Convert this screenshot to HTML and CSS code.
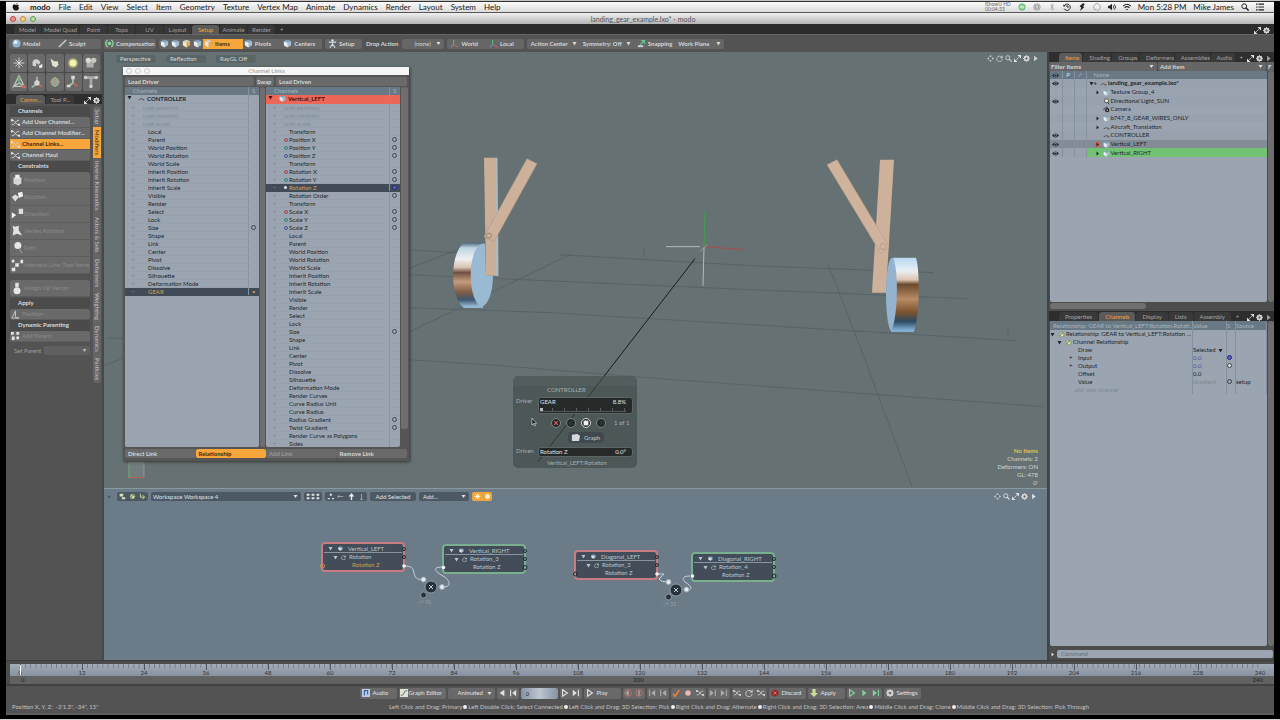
FILE: index.html
```html
<!DOCTYPE html>
<html lang="en">
<head>
<meta charset="utf-8">
<title>landing_gear_example.lxo* - modo</title>
<link rel="stylesheet" href="styles.css">
</head>
<body>
<svg class="sprite" aria-hidden="true">
  <defs>
    <linearGradient id="chromeL" x1="0" y1="0" x2="0" y2="1"><stop offset="0" stop-color="#49657c"/><stop offset=".08" stop-color="#bdd3e2"/><stop offset=".25" stop-color="#eef0f2"/><stop offset=".38" stop-color="#d9c3b2"/><stop offset=".46" stop-color="#6f5040"/><stop offset=".6" stop-color="#c39c7e"/><stop offset=".76" stop-color="#7f5d45"/><stop offset=".88" stop-color="#3e5870"/><stop offset="1" stop-color="#a5cbea"/></linearGradient>
    <linearGradient id="chromeR" x1="0" y1="0" x2="0" y2="1"><stop offset="0" stop-color="#b8d8f0"/><stop offset=".18" stop-color="#e9eff4"/><stop offset=".3" stop-color="#dcc4b0"/><stop offset=".36" stop-color="#6b4a2c"/><stop offset=".56" stop-color="#b88c64"/><stop offset=".74" stop-color="#7a522e"/><stop offset=".86" stop-color="#2c4a62"/><stop offset="1" stop-color="#8ebee6"/></linearGradient>
    <symbol id="cube" viewBox="0 0 10 10"><path d="M1 2.5 5 1l4 1.5V7L5 9.5 1 7z" fill="#a9bdcc"/><path d="M1 2.5 5 4v5.500L1 7z" fill="#e8edf0"/><path d="M1 2.500 5 1l4 1.500L5 4z" fill="#7aa3bf"/></symbol>
    <symbol id="cubeo" viewBox="0 0 10 10"><path d="M1 2.500 5 1l4 1.500V7L5 9.500 1 7z" fill="#e2a552"/><path d="M1 2.500 5 4v5.500L1 7z" fill="#efe6d4"/><path d="M1 2.500 5 1l4 1.500L5 4z" fill="#c9d3d9"/></symbol>
    <symbol id="pan" viewBox="0 0 10 10"><path d="M5 0l2 2.500H3zM5 10l2-2.500H3zM0 5l2.500-2v4zM10 5 7.500 3v4z" fill="#c8cece"/></symbol>
    <symbol id="spin" viewBox="0 0 10 10"><path d="M8 3A4 4 0 1 0 9 6" fill="none" stroke="#c8cece" stroke-width="1.200"/><path d="M9.500.5v4h-4z" fill="#c8cece"/></symbol>
    <symbol id="mag" viewBox="0 0 10 10"><circle cx="4" cy="4" r="3" fill="none" stroke="currentColor" stroke-width="1.200"/><path d="m6 6 3.500 3.500" stroke="currentColor" stroke-width="1.600"/></symbol>
    <symbol id="expand" viewBox="0 0 10 10"><path d="M5 0h5v5zM0 5v5h5zM4 6l3-3" fill="#e2e2e2"/><path d="m3 7 4-4" stroke="#e2e2e2"/></symbol>
    <symbol id="gear" viewBox="0 0 10 10"><circle cx="5" cy="5" r="3" fill="none" stroke="#d4d4d4" stroke-width="2"/><path d="M5 0v10M0 5h10M1.500 1.500l7 7M8.500 1.500l-7 7" stroke="#d4d4d4" stroke-width="1.200"/><circle cx="5" cy="5" r="1.300" fill="#555"/></symbol>
    <symbol id="tri" viewBox="0 0 10 10"><path d="m3 1 5 4-5 4z" fill="currentColor"/></symbol>
    <symbol id="down" viewBox="0 0 10 10"><path d="m1 2h8L5 9z" fill="currentColor"/></symbol>
    <symbol id="eye" viewBox="0 0 10 10"><path d="M0 5Q5-1 10 5 5 11 0 5" fill="#222d37"/><circle cx="5" cy="5" r="2" fill="#8997a3"/><circle cx="5" cy="5" r="1.200" fill="#10151b"/></symbol>
    <symbol id="curve" viewBox="0 0 10 10"><path d="M1 7q4-4 8 0" fill="none" stroke="#4a5058" stroke-width="1.200"/><path d="M6 7h3" stroke="#a33"/></symbol>
    <symbol id="play" viewBox="0 0 10 10"><path d="m2 1 6 4-6 4z" fill="none" stroke="currentColor" stroke-width="1.400"/></symbol>
    <symbol id="back" viewBox="0 0 10 10"><path d="M8 1 2 5l6 4z" fill="currentColor"/></symbol>
    <symbol id="step" viewBox="0 0 10 10"><path d="m1 1 5 4-5 4z" fill="currentColor"/><path d="M8 1v8" stroke="currentColor" stroke-width="1.400"/></symbol>
    <symbol id="stepb" viewBox="0 0 10 10"><path d="m9 1-5 4 5 4z" fill="currentColor"/><path d="M2 1v8" stroke="currentColor" stroke-width="1.400"/></symbol>
    <symbol id="fig" viewBox="0 0 10 10"><circle cx="5" cy="1.500" r="1.300" fill="#cfe0ea"/><path d="M1 3.500h8M5 3v3L2 9.500M5 6l3 3.500" fill="none" stroke="#cfe0ea" stroke-width="1.300"/></symbol>
    <symbol id="axis" viewBox="0 0 10 10"><path d="M4 6V1" stroke="#59b777" stroke-width="1.200"/><path d="m4 6 5 3" stroke="#d06056" stroke-width="1.200"/><path d="m4 6-3 3" stroke="#6a8fc8" stroke-width="1.200"/></symbol>
    <symbol id="chan" viewBox="0 0 10 10"><path d="M1 2.500q3 0 4 2.500t4 2.500M1 7.500Q4 7.500 5 5t4-2.500" fill="none" stroke="#d2d2d2"/><path d="M0 1.500h2v2H0zM8 6.500h2v2H8z" fill="#eee"/></symbol>
    <symbol id="rel" viewBox="0 0 10 10"><circle cx="5" cy="5" r="3.500" fill="#dfe6c5" stroke="#6d8b4f"/><path d="M3 7q1-4 4-4" fill="none" stroke="#53733b" stroke-width="1.300"/></symbol>
  </defs>
</svg>

<header class="menubar">
  <svg class="apple" viewBox="0 0 10 10"><path d="M5 3C3-.5 0 3 1 6s2.500 4 4 3c1.500 1 3 0 4-3C7 5 7.500 3.500 8.700 3 7.500 1.500 6 2.500 5 3zM5 2.300Q5 .500 6.800 0 7 2 5 2.300" fill="#111"/></svg>
  <nav class="menus"><button class="app-name">modo</button><button>File</button><button>Edit</button><button>View</button><button>Select</button><button>Item</button><button>Geometry</button><button>Texture</button><button>Vertex Map</button><button>Animate</button><button>Dynamics</button><button>Render</button><button>Layout</button><button>System</button><button>Help</button></nav>
  <div class="status-icons">
    <div class="rec">iShowU HD<br>00:04:33</div>
    <svg viewBox="0 0 10 10"><circle cx="5" cy="5" r="4" fill="#8ad89a" stroke="#58a868"/><path d="M2 5h6" stroke="#fff"/></svg>
    <svg viewBox="0 0 10 10"><circle cx="5" cy="5" r="4" fill="none" stroke="#888"/><path d="M3 3.500h4v3H3z" fill="none" stroke="#888"/></svg>
    <svg viewBox="0 0 10 10"><path d="m3 3 4 4-2 2V1l2 2-4 4" fill="none" stroke="#999" stroke-width=".8"/></svg>
    <svg viewBox="0 0 10 10"><path d="M1.500 3.500A4 4 0 1 1 1.500 7M5 2.500V5h2.500" fill="none" stroke="#222" stroke-width="1.200"/><path d="M0 2l1 3 2.500-1.500z" fill="#222"/></svg>
    <svg viewBox="0 0 10 10"><path d="M6.500 0 2 4l2 1.500L2.500 10 8 5 6 4l2.500-2z" fill="#222"/></svg>
    <svg viewBox="0 0 10 10"><path d="M2 8.500Q-1 5 2 2t6 0 0 6-4 0z" fill="none" stroke="#888" stroke-width=".8"/></svg>
    <svg viewBox="0 0 10 10"><path d="M0 3.500h2L5 1v8L2 6.500H0z" fill="#222"/><path d="M6.500 3q1.500 2 0 4M8 1.500q3 3.500 0 7" fill="none" stroke="#222"/></svg>
    <svg viewBox="0 0 10 10"><path d="M0 4q5-5 10 0M2 6q3-3 6 0" fill="none" stroke="#222" stroke-width="1.300"/><path d="m3.500 7.500h3L5 9z" fill="#222"/></svg>
    <span>Mon 5:28 PM</span><span>Mike James</span>
    <svg viewBox="0 0 10 10"><use href="#mag"/></svg>
    <svg viewBox="0 0 10 10"><path d="M0 1.500h2m1 0h7M0 5h2m1 0h7M0 8.500h2m1 0h7" stroke="#222" stroke-width="1.500"/></svg>
  </div>
</header>

<div class="titlebar"><i class="light red"></i><i class="light amber"></i><i class="light green"></i><h1>landing_gear_example.lxo* - modo</h1></div>

<div class="layout-tabs">
  <button>Model</button><button class="long">Model Quad</button><button>Paint</button><button>Topo</button><button>UV</button><button>Layout</button><button class="on">Setup</button><button>Animate</button><button>Render</button><span class="plus">+</span>
  <span class="corner"><svg><use href="#expand"/></svg><svg><use href="#gear"/></svg></span>
</div>

<div class="toolbar">
  <div class="group w-mode"><button><svg viewBox="0 0 10 10"><circle cx="5" cy="5" r="4.500" fill="#8fb5d6"/><circle cx="4" cy="3.500" r="2" fill="#e9f2f8"/></svg>Model</button><button><svg viewBox="0 0 10 10"><path d="M1 9 9 1" stroke="#c6cbd0" stroke-width="1.600"/></svg>Sculpt</button></div>
  <div class="group w-comp"><button><svg viewBox="0 0 10 10"><path d="M3 1Q-1 5 3 9M7 1q4 4 0 8" fill="none" stroke="#8fd6a0" stroke-width="1.400"/><circle cx="5" cy="5" r="2" fill="#8fd6a0"/></svg>Compensation</button></div>
  <div class="group w-sel"><button aria-label="Vertices"><svg><use href="#cube"/></svg></button><button aria-label="Edges"><svg><use href="#cube"/></svg></button><button aria-label="Polygons"><svg><use href="#cubeo"/></svg></button><button aria-label="Materials"><svg><use href="#cube"/></svg></button><button class="on wide"><svg><use href="#cubeo"/></svg>Items</button><button class="wide"><svg><use href="#cube"/></svg>Pivots</button><button class="wide"><svg><use href="#cube"/></svg>Centers</button></div>
  <div class="group w-setup"><button><svg><use href="#fig"/></svg>Setup</button></div>
  <label class="drop" for="drop">Drop Action</label><select id="drop" class="w-drop"><option>(none)</option></select>
  <div class="group w-world"><button><svg><use href="#axis"/></svg>World</button><button><svg><use href="#axis"/></svg>Local</button></div>
  <div class="group w-action"><button>Action Center <svg class="arr"><use href="#down"/></svg></button><button>Symmetry: Off <svg class="arr"><use href="#down"/></svg></button><button><svg viewBox="0 0 10 10"><path d="M4 1h5v5L7 4 4 7 3 6l3-3z" fill="#63c795"/><path d="M1 7h6v2H1z" fill="#cfd8d8"/></svg>Snapping</button><button>Work Plane <svg class="arr far"><use href="#down"/></svg></button></div>
</div>

<main class="work">
  <aside class="left">
    <div class="tools">
      <button aria-label="Locator"><svg viewBox="0 0 18 18"><path d="M9 3v12M3 9h12M5 5l8 8M13 5l-8 8" stroke="#ddd"/></svg></button>
      <button aria-label="Bend"><svg viewBox="0 0 18 18"><path d="M4 12V8q1-4 6-3l3 3-2 3-3-2v4z" fill="#cfd0cf"/><path d="m11 12 4-2v4l-3 1z" fill="#eee"/></svg></button>
      <button aria-label="Grab"><svg viewBox="0 0 18 18"><path d="m4 4 4 3h4l1 4-3 3-4-2z" fill="#e4dfd2"/></svg></button>
      <button aria-label="Light"><svg viewBox="0 0 18 18"><circle cx="9" cy="9" r="6" fill="#979a67"/><circle cx="9" cy="9" r="4" fill="#f2f3b4"/></svg></button>
      <button aria-label="Camera"><svg viewBox="0 0 18 18"><path d="M4 8h8v6H4z" fill="#b0b0aa"/><circle cx="6" cy="6" r="3" fill="#dcdcd6"/><circle cx="12" cy="6" r="3" fill="#c9c9c2"/></svg></button>
      <button aria-label="Transform"><svg viewBox="0 0 18 18"><path d="M9 2 3 14l6-4 6 4zM3 14h12" fill="none" stroke="#b9c4bc" stroke-width="1.500"/><path d="M9 10V3" stroke="#6fb07c" stroke-width="2"/><circle cx="14" cy="14" r="2" fill="#bd6a60"/></svg></button>
      <button aria-label="Move"><svg viewBox="0 0 18 18"><path d="M9 11V3M9 11l-6 4" stroke="#9cbba2" stroke-width="2"/><path d="m9 11 6 3" stroke="#c2655c" stroke-width="2"/><circle cx="9" cy="10" r="3" fill="#d5d5d0"/></svg></button>
      <button aria-label="Rotate"><svg viewBox="0 0 18 18"><circle cx="9" cy="9" r="5" fill="#9aa09b"/><ellipse cx="9" cy="9" rx="5" ry="2.500" fill="none" stroke="#d17c72"/><ellipse cx="9" cy="9" rx="2.500" ry="5" fill="none" stroke="#7ac78a"/></svg></button>
      <button aria-label="Scale"><svg viewBox="0 0 18 18"><path d="m9 10 5 4" stroke="#c2655c" stroke-width="2"/><path d="M9 10V4M9 10l-5 4" stroke="#a7c2ab" stroke-width="2"/><path d="M7 2h4v4H7zM2 12h4v3H2z" fill="#d6d9d2"/></svg></button>
      <button aria-label="Joint"><svg viewBox="0 0 18 18"><path d="M3 4h12M9 4v10" stroke="#a9a9a7" stroke-width="3"/><circle cx="3" cy="4" r="2" fill="#ccc"/><circle cx="15" cy="4" r="2" fill="#ccc"/><circle cx="9" cy="14" r="2" fill="#ccc"/></svg></button>
    </div>
    <div class="tabs side-tabs"><button class="on">Comm...</button><button>Tool P...</button><span class="corner"><svg><use href="#expand"/></svg><svg><use href="#gear"/></svg></span></div>
    <div class="side-body">
      <div class="side-main">
        <h2>Channels</h2>
        <div class="stack"><button><svg><use href="#chan"/></svg>Add User Channel...</button><button><svg><use href="#chan"/></svg>Add Channel Modifier...</button><button class="on"><svg><use href="#chan"/></svg>Channel Links...</button><button><svg><use href="#chan"/></svg>Channel Haul</button></div>
        <h2>Constraints</h2>
        <div class="stack big">
          <button disabled><svg viewBox="0 0 16 16"><path d="M4 5h9v7l-4 2-5-2z" fill="#d6d6d6"/><path d="M6 2h5v4H6z" fill="#f0f0f0"/></svg>Position</button>
          <button disabled><svg viewBox="0 0 16 16"><path d="m2 8 4-3 4 3-4 5z" fill="#ddd"/><path d="m9 3 5-1 1 5-5 2z" fill="#f0f0f0"/></svg>Rotation</button>
          <button disabled><svg viewBox="0 0 16 16"><path d="m2 6 5 3-5 4z" fill="#f2f2f2"/><path d="M10 2h5v6h-5z" fill="#ddd"/></svg>Direction</button>
          <button disabled><svg viewBox="0 0 16 16"><path d="m3 2 3 1 4-1v5l4 6-6-2-5 2 1-6z" fill="#e2e2e2"/></svg>Vertex Position</button>
          <button disabled><svg viewBox="0 0 16 16"><circle cx="9" cy="5" r="4" fill="#e6e6e6"/><path d="m10 8 4 6" stroke="#aaa"/></svg>Path</button>
          <button disabled><svg viewBox="0 0 16 16"><path d="m4 12 4-4 6-4" stroke="#999"/><path d="M2 11h4v4H2zM6 6h4v4H6zM12 2h3v4h-3zM2 2h3v3H2z" fill="#e6e6e6"/></svg>Intersect Line: Two Items</button>
        </div>
        <div class="stack big lone"><button disabled><svg viewBox="0 0 16 16"><path d="M6 2h4v5H6z" fill="#ddd"/><circle cx="8" cy="11" r="4" fill="#e6e6e6"/></svg>Assign Up Vector</button></div>
        <h2>Apply</h2>
        <div class="stack"><button disabled><svg viewBox="0 0 10 10"><path d="m1 9 4-8v7l4 1z" fill="none" stroke="#ccc"/></svg>Position</button></div>
        <h2>Dynamic Parenting</h2>
        <div class="stack"><button disabled><svg viewBox="0 0 10 10"><path d="M0 0h3v3H0zM6 0h3v3H6zM1 5h3v4H1zM6 5h3v3H6z" fill="#e6e6e6"/></svg>Add Parent</button></div>
        <div class="set-parent"><label for="sp">Set Parent</label><select id="sp" disabled><option></option></select></div>
      </div>
      <nav class="vtabs"><button>Setup</button><button class="on">Modifiers</button><button>Inverse Kinematics</button><button>Actors &amp; Sets</button><button>Deformers</button><button>Weighting</button><button>Dynamics</button><button>Particles</button></nav>
    </div>
  </aside>

  <div class="centre">
    <section class="viewport">
      <svg class="scene" viewBox="104 52 943 437" preserveAspectRatio="xMidYMid slice">
        <g fill="none" stroke="#515d5e" stroke-width=".7">
          <path d="M108 338l15 1M104 366l20-8M408 269l50-19M570 255 408 333M408 250l80 5M560 255l190 11 184 7M408 275l342 15 217 9M408 308l142 5 200 12 266 16M408 360l92 6 160 13 383 28M828 264l37 96 47 127M644 249v8M1008 329v5"/>
        </g>
        <path d="M695 259 538 462" stroke="#151d1e"/>
        <path d="M484 158h12l2 118h-12z" fill="#c9ae98"/><path d="M496 158h1.500l1 118h-3z" fill="#aebac0"/>
        <path d="M464 243h21l-2 65h-19C450 300 449 254 464 243z" fill="url(#chromeL)"/>
        <path d="M482 244c-15 5-15 58 0 63 6-2 11-14 11-31h-7l-1-32z" fill="#9ab9d2"/>
        <path d="m527 159 10 5-43 78-10-5z" fill="#cdb19b" stroke="#af9784" stroke-width=".6"/><circle cx="489" cy="236" r="2.500" fill="none" stroke="#927b68" stroke-width=".8"/>
        <path d="M880 160h14l-8 133h-14z" fill="#cdb19a"/>
        <path d="m827 165 10-5 52 87-8 7z" fill="#d0b39d" stroke="#b39983" stroke-width=".5"/><circle cx="883" cy="247" r="3" fill="none" stroke="#ab917c" stroke-width=".6"/>
        <ellipse cx="892" cy="295" rx="6" ry="37" fill="#93b3ce"/>
        <path d="M893 258h23c4 12 4 57-2 74h-23c7-12 8-62 2-74z" fill="url(#chromeR)"/>
        <path d="m705 211-1 37" stroke="#3e9f4b"/><path d="m704 248-1 38M666 247h34" stroke="#b4bbba"/><path d="m706 247 37 3" stroke="#b04a4c"/><path d="m700 252 7-7" stroke="#9aa4a4"/>
        <path d="M129 463h15v15h-15z" fill="#7d8786" fill-opacity=".5" stroke="#a7adac" stroke-width=".6"/><path d="M129 463v15" stroke="#57a162"/><path d="M130 478h14" stroke="#b35c59"/>
      </svg>
      <div class="vp-top"><button>Perspective</button><button>Reflection</button><button>RayGL Off</button><span class="corner"><svg><use href="#pan"/></svg><svg><use href="#spin"/></svg><svg><use href="#mag"/></svg><svg><use href="#expand"/></svg><svg><use href="#gear"/></svg><svg><use href="#tri"/></svg></span></div>

      <section class="links" aria-label="Channel Links">
        <div class="links-title"><i></i><i></i><i></i><span>Channel Links</span></div>
        <div class="links-load"><button>Load Driver</button><button class="swap">Swap</button><button>Load Driven</button></div>
        <div class="links-lists">
          <div class="list">
            <table class="chan"><thead><tr><th>Channels<th>S</thead>
            <tbody>
            <tr class="root"><td><svg><use href="#down"/></svg><svg class="ic"><use href="#curve"/></svg>CONTROLLER<td>
            <tr class="add"><td>(add position)<td>
            <tr class="add"><td>(add rotation)<td>
            <tr class="add"><td>(add scale)<td>
            <tr><td>Local<td>
            <tr><td>Parent<td>
            <tr><td>World Position<td>
            <tr><td>World Rotation<td>
            <tr><td>World Scale<td>
            <tr><td>Inherit Position<td>
            <tr><td>Inherit Rotation<td>
            <tr><td>Inherit Scale<td>
            <tr><td>Visible<td>
            <tr><td>Render<td>
            <tr><td>Select<td>
            <tr><td>Lock<td>
            <tr><td>Size<td><i class="o"></i>
            <tr><td>Shape<td>
            <tr><td>Link<td>
            <tr><td>Center<td>
            <tr><td>Pivot<td>
            <tr><td>Dissolve<td>
            <tr><td>Silhouette<td>
            <tr><td>Deformation Mode<td>
            <tr class="sel"><td>GEAR<td>•
            </tbody></table>
          </div>
          <div class="bar"></div>
          <div class="list">
            <table class="chan driven"><thead><tr><th>Channels<th>S</thead>
            <tbody>
            <tr class="root hot"><td><svg><use href="#down"/></svg><svg class="ic"><use href="#cube"/></svg>Vertical_LEFT<td>
            <tr class="add"><td>(add position)<td>
            <tr class="add"><td>(add rotation)<td>
            <tr class="add"><td>(add scale)<td>
            <tr><td>Transform<td>
            <tr><td><i class="x"></i>Position X<td><i class="o"></i>
            <tr><td><i class="y"></i>Position Y<td><i class="o"></i>
            <tr><td><i class="z"></i>Position Z<td><i class="o"></i>
            <tr><td>Transform<td>
            <tr><td><i class="x"></i>Rotation X<td><i class="o"></i>
            <tr><td><i class="y"></i>Rotation Y<td><i class="o"></i>
            <tr class="sel"><td><i class="dot"></i>Rotation Z<td><i class="o blue"></i>
            <tr><td>Rotation Order<td><i class="o"></i>
            <tr><td>Transform<td>
            <tr><td><i class="x"></i>Scale X<td><i class="o"></i>
            <tr><td><i class="y"></i>Scale Y<td><i class="o"></i>
            <tr><td><i class="z"></i>Scale Z<td><i class="o"></i>
            <tr><td>Local<td>
            <tr><td>Parent<td>
            <tr><td>World Position<td>
            <tr><td>World Rotation<td>
            <tr><td>World Scale<td>
            <tr><td>Inherit Position<td>
            <tr><td>Inherit Rotation<td>
            <tr><td>Inherit Scale<td>
            <tr><td>Visible<td>
            <tr><td>Render<td>
            <tr><td>Select<td>
            <tr><td>Lock<td>
            <tr><td>Size<td><i class="o"></i>
            <tr><td>Shape<td>
            <tr><td>Link<td>
            <tr><td>Center<td>
            <tr><td>Pivot<td>
            <tr><td>Dissolve<td>
            <tr><td>Silhouette<td>
            <tr><td>Deformation Mode<td>
            <tr><td>Render Curves<td>
            <tr><td>Curve Radius Unit<td>
            <tr><td>Curve Radius<td>
            <tr><td>Radius Gradient<td><i class="o"></i>
            <tr><td>Twist Gradient<td><i class="o"></i>
            <tr><td>Render Curve as Polygons<td>
            <tr><td>Sides<td>
            </tbody></table>
          </div>
          <div class="bar short"></div>
        </div>
        <div class="links-foot"><button>Direct Link</button><button class="on">Relationship</button><button disabled>Add Link</button><button>Remove Link</button></div>
      </section>

      <section class="hud" aria-label="Controller">
        <div class="hud-name">CONTROLLER</div>
        <div class="hud-row"><span>Driver</span><div class="hud-box tall"><b>GEAR</b><b>8.8%</b><input type="range" min="0" max="100" value="0" aria-label="Gear"></div></div>
        <div class="hud-keys"><button aria-label="Delete key"><svg viewBox="0 0 10 10"><path d="m2 2 6 6M8 2 2 8" stroke="#e0544c" stroke-width="2"/></svg></button><button aria-label="Previous key"><svg viewBox="0 0 10 10"><path d="M6 2 3 5l3 3" fill="none" stroke="#555f5f"/></svg></button><button class="white" aria-label="Set key"><svg viewBox="0 0 10 10"><path d="M1 1h8v8H1z" fill="#f0f0f0"/></svg></button><button aria-label="Next key"><svg viewBox="0 0 10 10"><path d="m4 2 3 3-3 3" fill="none" stroke="#555f5f"/></svg></button><span>1 of 1</span></div>
        <button class="graph"><svg viewBox="0 0 10 10"><path d="M1 2l6-1 3 2-1 6H1z" fill="#d5d8e0"/></svg>Graph</button>
        <div class="hud-row"><span>Driven</span><div class="hud-box"><b>Rotation Z</b><b>0.0°</b></div></div>
        <div class="hud-name low">Vertical_LEFT:Rotation</div>
      </section>
      <svg class="cursor" viewBox="0 0 6 10"><path d="M1 1v7l1.500-1.500 1 2.500 1-.5-1-2.200h2z" fill="#111" stroke="#ddd" stroke-width=".7"/></svg>
      <div class="vp-info"><b>No Items</b><span>Channels: 2</span><span>Deformers: ON</span><span>GL: 478</span><span>0'</span></div>
    </section>

    <section class="nodes">
      <div class="node-bar">
        <svg class="fold"><use href="#down"/></svg>
        <div class="group three"><button aria-label="New workspace"><svg viewBox="0 0 10 10"><path d="M1 1h5v4H1zM4 6h5v3H4z" fill="#d9dfb4"/></svg></button><button aria-label="Add to workspace"><svg><use href="#rel"/></svg></button><button aria-label="Show links"><svg viewBox="0 0 10 10"><path d="M2 1v5h6M5 3l3 3-3 3" fill="none" stroke="#c5d38e" stroke-width="1.400"/></svg></button></div>
        <select class="ws" aria-label="Workspace"><option>Workspace Workspace 4</option></select>
        <div class="group two"><button aria-label="Align"><svg class="wide-ic" viewBox="0 0 20 10"><path d="M1 1h4v3H1zM8 1h4v3H8zM15 1h4v3h-4zM1 6h4v3H1zM8 6h4v3H8zM15 6h4v3h-4z" fill="#dfe3e5"/></svg></button></div>
        <div class="group four"><button aria-label="Tree"><svg viewBox="0 0 10 10"><path d="M4 1h3v3H4zM1 7h3v2H1zM7 7h3v2H7zM5 4v4" fill="#ddd"/></svg></button><button aria-label="Left"><svg viewBox="0 0 10 10"><path d="M1 5h8M1 5l2-2M1 5l2 2" stroke="#bbb"/></svg></button><button aria-label="Up"><svg viewBox="0 0 10 10"><path d="M5 0 1 5h3v5h2V5h3z" fill="#eee"/></svg></button><button aria-label="Down"><svg viewBox="0 0 10 10"><path d="M5 1v8M3 9h4" stroke="#bbb"/></svg></button></div>
        <button class="add-sel">Add Selected</button><select class="add-more" aria-label="Add"><option>Add...</option></select>
        <div class="group orange"><button aria-label="Inputs"><svg viewBox="0 0 10 10"><path d="M5 1v8M1 5h8M2 2l6 6M8 2 2 8" stroke="#fff3d0" stroke-width="1.400"/></svg></button><button aria-label="Outputs"><svg viewBox="0 0 10 10"><circle cx="5" cy="5" r="3.500" fill="#fff3d0"/></svg></button></div>
        <span class="corner"><svg><use href="#pan"/></svg><svg><use href="#mag"/></svg><svg><use href="#expand"/></svg><svg><use href="#gear"/></svg><svg><use href="#tri"/></svg></span>
      </div>
      <div class="canvas">
        <div class="node pink n1"><div><svg><use href="#down"/></svg><svg><use href="#cube"/></svg>Vertical_LEFT</div><div><svg><use href="#down"/></svg><svg><use href="#spin"/></svg>Rotation</div><div class="out gold">Rotation Z</div></div>
        <div class="node lime n2"><div><svg><use href="#down"/></svg><svg><use href="#cube"/></svg>Vertical_RIGHT</div><div><svg><use href="#down"/></svg><svg><use href="#spin"/></svg>Rotation_3</div><div class="out">Rotation Z</div></div>
        <div class="node pink n3"><div><svg><use href="#down"/></svg><svg><use href="#cube"/></svg>Diagonal_LEFT</div><div><svg><use href="#down"/></svg><svg><use href="#spin"/></svg>Rotation_2</div><div class="out">Rotation Z</div></div>
        <div class="node lime n4"><div><svg><use href="#down"/></svg><svg><use href="#cube"/></svg>Diagonal_RIGHT</div><div><svg><use href="#down"/></svg><svg><use href="#spin"/></svg>Rotation_4</div><div class="out">Rotation Z</div></div>
        <svg class="wires" width="943" height="172" viewBox="104 489 943 172">
          <g fill="none" stroke="#c9d1e0"><path d="M404 566c8 0 9 2 10 7s3 6 8 7M443 587c10 0 6-8 0-11-12-7-8-9 0-9M657 574h7l-5 5q2 3 8 3M687 590c8 0 2-6-2-8-4-4-1-6 5-6"/></g>
          <g fill="#27313b" stroke="#9daab5" stroke-width=".8"><circle cx="431" cy="587" r="6"/><circle cx="676" cy="590" r="6"/><circle cx="423.500" cy="595" r="3"/><circle cx="668.500" cy="597" r="3"/></g>
          <g fill="#e6ebf2" stroke="#9daab5"><circle cx="423.500" cy="579.500" r="2.500"/><circle cx="442" cy="587" r="2.500"/><circle cx="668.500" cy="582" r="2.500"/><circle cx="686.500" cy="589.500" r="2.500"/></g>
          <path d="m429 585 4 4m0-4-4 4" stroke="#c9d1da"/><path d="m674 588 4 4m0-4-4 4" stroke="#c9d1da"/>
          <g fill="#f0f2f5"><circle cx="404" cy="566" r="1.800"/><circle cx="443.500" cy="567.500" r="1.800"/><circle cx="657" cy="574" r="1.800"/><circle cx="692.500" cy="576" r="1.800"/></g>
          <g fill="none" stroke="#1f2830"><circle cx="404" cy="549" r="1.500"/><circle cx="404" cy="557" r="1.500"/><circle cx="525" cy="551" r="1.500"/><circle cx="525" cy="559" r="1.500"/><circle cx="525" cy="567.500" r="2"/><circle cx="657" cy="557" r="1.500"/><circle cx="657" cy="565" r="1.500"/><circle cx="575.500" cy="574" r="2"/><circle cx="774" cy="559" r="1.500"/><circle cx="774" cy="567" r="1.500"/><circle cx="774" cy="576" r="2"/></g>
          <circle cx="322.500" cy="566" r="2" fill="none" stroke="#c39447"/>
          <text x="417" y="604">-/+ 90</text><text x="662" y="606">-/+ 33</text>
        </svg>
      </div>
    </section>
  </div>

  <aside class="right">
    <div class="tabs"><button class="on">Items</button><button>Shading</button><button>Groups</button><button>Deformers</button><button>Assemblies</button><button>Audio</button><span class="plus">+</span><span class="corner"><svg><use href="#expand"/></svg><svg><use href="#gear"/></svg><svg><use href="#tri"/></svg></span></div>
    <div class="filter"><select aria-label="Filter Items"><option>Filter Items</option></select><select aria-label="Add Item"><option>Add Item</option></select><button>F</button></div>
    <div class="pane items-pane">
      <div class="list">
        <table class="items"><thead><tr><th><svg><use href="#eye"/></svg><th>P<th>⁄<th class="nm">Name</thead><tbody>
        <tr class="scene-row"><td><svg><use href="#eye"/></svg><td><td><td><svg><use href="#down"/></svg>+<svg class="ic"><use href="#curve"/></svg>landing_gear_example.lxo*
        <tr><td><td><td><td class="kid"><svg><use href="#tri"/></svg><svg class="ic"><use href="#cube"/></svg>Texture Group_4
        <tr><td><svg><use href="#eye"/></svg><td><td><td class="kid"><svg></svg><svg class="ic" viewBox="0 0 10 10"><circle cx="5" cy="4" r="3" fill="#e9e4c9" stroke="#333"/><path d="m6 6 3 3" stroke="#222"/></svg>Directional Light_SUN
        <tr><td><td><td><td class="kid"><svg></svg><svg class="ic" viewBox="0 0 10 10"><path d="M7 2Q2 1 1 6" fill="none" stroke="#222"/><circle cx="6" cy="6" r="3" fill="#222"/><circle cx="6" cy="6" r="1" fill="#ddd"/></svg>Camera
        <tr><td><td><td><td class="kid"><svg><use href="#tri"/></svg><svg class="ic"><use href="#cube"/></svg>b747_8_GEAR_WIRES_ONLY
        <tr><td><td><td><td class="kid"><svg><use href="#tri"/></svg><svg class="ic"><use href="#curve"/></svg>Aircraft_Translation
        <tr><td><svg><use href="#eye"/></svg><td><td><td class="kid"><svg></svg><svg class="ic"><use href="#curve"/></svg>CONTROLLER
        <tr class="dim"><td><svg><use href="#eye"/></svg><td><td><td class="kid"><svg class="flag"><use href="#tri"/></svg><svg class="ic"><use href="#cube"/></svg>Vertical_LEFT
        <tr class="go"><td><svg><use href="#eye"/></svg><td><td><td class="kid"><svg><use href="#tri"/></svg><svg class="ic"><use href="#cube"/></svg>Vertical_RIGHT
        </tbody></table>
      </div>
      <div class="bar"></div>
    </div>
    <div class="hbar"></div>
    <div class="tabs"><button>Properties</button><button class="on">Channels</button><button>Display</button><button>Lists</button><button>Assembly</button><span class="plus">+</span><span class="corner"><svg><use href="#expand"/></svg><svg><use href="#gear"/></svg><svg><use href="#tri"/></svg></span></div>
    <div class="pane">
      <div class="list">
        <table class="props"><thead><tr><th>Relationship: GEAR to Vertical_LEFT:Rotation.Rotati...<th>Value<th>S<th>Source</thead><tbody>
        <tr><td class="l0"><svg><use href="#down"/></svg><svg class="ic"><use href="#rel"/></svg>Relationship: GEAR to Vertical_LEFT:Rotation ...<td><td><td>
        <tr><td class="l1"><svg><use href="#down"/></svg><svg class="ic"><use href="#rel"/></svg>Channel Relationship<td><td><td>
        <tr><td class="l2">Draw<td>Selected<svg class="sd"><use href="#down"/></svg><td><td>
        <tr><td class="l2 plusrow">Input<td class="num">0.0<td><i class="o blue"></i><td>
        <tr><td class="l2 plusrow">Output<td class="num">0.0<td><i class="o pale"></i><td>
        <tr><td class="l2">Offset<td>0.0<td><td>
        <tr><td class="l2">Value<td class="ghost">Gradient<td><i class="o"></i><td>setup
        <tr><td class="l3 ghost">add user channel<td><td><td>
        </tbody></table>
      </div>
      <div class="bar"></div>
    </div>
    <div class="command"><svg><use href="#tri"/></svg><input type="text" placeholder="Command" aria-label="Command"></div>
  </aside>
</main>

<section class="timeline" aria-label="Timeline">
  <div class="ruler"><div class="ticks"><i class="head"></i><span>0</span><span>12</span><span>24</span><span>36</span><span>48</span><span>60</span><span>72</span><span>84</span><span>96</span><span>108</span><span>120</span><span>132</span><span>144</span><span>156</span><span>168</span><span>180</span><span>192</span><span>204</span><span>216</span><span>228</span><span>240</span></div></div>
  <div class="range"><span>0</span><span>200</span><span>240</span></div>
</section>

<div class="transport">
  <button class="b38"><svg viewBox="0 0 10 10"><path d="M0 0h10v10H0z" fill="#b9cbe4"/><path d="M3 8V2h4v5" fill="none" stroke="#3c63a8" stroke-width="1.400"/></svg>Audio</button>
  <button class="b48"><svg viewBox="0 0 10 10"><path d="M0 0h10v10H0z" fill="#dfe3d2"/><path d="M1 8q4 0 4-3t4-3" fill="none" stroke="#555"/></svg>Graph Editor</button>
  <select class="b48" aria-label="Channel mode"><option>Animated</option></select>
  <div class="group b24"><button aria-label="Play backward"><svg><use href="#back"/></svg></button><button aria-label="Previous frame"><svg><use href="#stepb"/></svg></button></div>
  <input class="frame" type="text" value="0" aria-label="Frame">
  <div class="group b24"><button aria-label="Play forward"><svg><use href="#play"/></svg></button><button aria-label="Next frame"><svg><use href="#step"/></svg></button></div>
  <button class="b38"><svg><use href="#play"/></svg>Play</button>
  <div class="group b24"><button class="r" aria-label="Record"><svg viewBox="0 0 10 10"><circle cx="5" cy="5" r="4" fill="none" stroke="currentColor"/><path d="M5 2v6M2 5h3" stroke="#ddd"/></svg></button><button class="r" aria-label="Auto key"><svg viewBox="0 0 10 10"><circle cx="5" cy="5" r="4" fill="none" stroke="currentColor"/><path d="M5 2v6" stroke="#ddd"/></svg></button></div>
  <div class="group b24 fade"><button aria-label="Previous key"><svg><use href="#stepb"/></svg></button><button aria-label="Next key"><svg><use href="#stepb"/></svg></button></div>
  <div class="group b34"><button class="r" aria-label="Key"><svg viewBox="0 0 10 10"><path d="m1 6 3 3 5-8" fill="none" stroke="#ee8138" stroke-width="2"/></svg></button><button class="r" aria-label="Key all"><svg viewBox="0 0 10 10"><circle cx="5" cy="5" r="3.500" fill="#e8b8b2"/></svg></button><button aria-label="Key list"><svg><use href="#chan"/></svg></button></div>
  <div class="group b24 fade"><button aria-label="First"><svg><use href="#step"/></svg></button><button aria-label="Last"><svg><use href="#step"/></svg></button></div>
  <div class="group b34"><button aria-label="Slope"><svg><use href="#chan"/></svg></button><button aria-label="Cycle"><svg><use href="#spin"/></svg></button><button aria-label="Curve"><svg><use href="#chan"/></svg></button></div>
  <button class="b38"><svg viewBox="0 0 10 10"><circle cx="5" cy="5" r="4.500" fill="#8c2f2b"/><path d="m3 3 4 4m0-4L3 7" stroke="#e77"/></svg>Discard</button>
  <button class="b38"><svg viewBox="0 0 10 10"><path d="M3 0h4v5h3l-5 5-5-5h3z" fill="#c9dc9a"/></svg>Apply</button>
  <div class="group b34 g"><button aria-label="Play range"><svg><use href="#play"/></svg></button><button aria-label="Play all"><svg><use href="#tri"/></svg></button><button aria-label="Play end"><svg><use href="#step"/></svg></button></div>
  <button class="b38"><svg><use href="#gear"/></svg>Settings</button>
</div>

<footer class="statusbar"><span class="pos">Position X, Y, Z:&nbsp; -3'1.3", -34", 15"</span><span class="hints">Left Click and Drag: Primary<i></i>Left Double Click: Select Connected<i></i>Left Click and Drag: 3D Selection: Pick<i></i>Right Click and Drag: Alternate<i></i>Right Click and Drag: 3D Selection: Area<i></i>Middle Click and Drag: Clone<i></i>Middle Click and Drag: 3D Selection: Pick Through</span></footer>
</body>
</html>
```
FILE: styles.css
```css
* { box-sizing: border-box; }
body {
  margin: 0;
  height: 100vh;
  display: flex;
  flex-direction: column;
  padding: 0 6px 4px;
  background: #000;
  border-bottom: 1px solid #d0d0d0;
  border-top: 1px solid #c4c4c4;
  font: 6px/8px Lato, "Open Sans", sans-serif;
  color: #d6d6d6;
  white-space: nowrap;
  overflow: hidden;
}
button, select, input { font: inherit; color: inherit; border: 0; margin: 0; padding: 0; background: none; min-width: 0; }
button { display: flex; align-items: center; }
svg { width: 7px; height: 7px; flex: none; }
h1, h2 { margin: 0; font: inherit; }
i { font-style: normal; }
table { border-collapse: collapse; width: 100%; table-layout: fixed; }
td, th { padding: 0; height: 8px; line-height: 8px; text-align: left; font-weight: normal; overflow: hidden; }
select {
  appearance: none;
  height: 9px;
  padding: 0 9px 0 4px;
  border-radius: 2px;
  background: #666 url("data:image/svg+xml,%3Csvg xmlns='http://www.w3.org/2000/svg' viewBox='0 0 10 10'%3E%3Cpath d='M1 2h8L5 8z' fill='%23ddd'/%3E%3C/svg%3E") no-repeat right 3px center / 5px 5px;
}
.sprite { position: absolute; width: 0; height: 0; }
.group { display: flex; }
.corner { display: flex; gap: 2px; align-items: center; margin-left: auto; }

/* System menu bar and window title */
.menubar { display: flex; align-items: center; height: 12px; background: linear-gradient(#fafafa, #dcdcdc); border-bottom: 1px solid #555; border-top: 1px solid #333; color: #1a1a1a; font-size: 8px; padding: 0 10px 0 6px; }
.apple { width: 8px; height: 8px; margin-right: 10px; }
.menus { display: flex; gap: 8px; }
.app-name { font-weight: bold; }
.status-icons { display: flex; align-items: center; gap: 7px; margin-left: auto; }
.status-icons svg { width: 8px; height: 8px; }
.rec { font-size: 5px; line-height: 5px; color: #666; }
.titlebar { display: flex; align-items: center; gap: 4px; height: 11px; padding: 0 4px; background: linear-gradient(#f0f0f0, #b5b5b5); color: #555; font-size: 7px; }
.titlebar h1 { flex: 1; text-align: center; padding-right: 24px; }
.light { width: 6px; height: 6px; border-radius: 50%; border: 1px solid; }
.red { background: #f0948c; border-color: #b4433d; }
.amber { background: #f6cf85; border-color: #c08a38; }
.green { background: #b6dfa0; border-color: #619b4b; }

/* Layout tabs */
.layout-tabs { display: flex; align-items: flex-end; height: 10px; padding: 0 4px 0 8px; background: #2c2c2c; color: #a0a0a0; }
.layout-tabs button { height: 9px; width: 27px; margin-right: 1px; justify-content: center; background: #373737; border-radius: 3px 3px 0 0; }
.layout-tabs .long { width: 37px; }
.layout-tabs .on, .tabs .on { background: #5a5a5a; color: #f2a33c; }
.plus { padding: 0 4px; }

/* Main toolbar */
.toolbar { display: flex; align-items: center; height: 18px; padding: 0 3px; background: #535353; border-top: 1px solid #656565; gap: 3px; font-weight: bold; color: #d5d5d5; }
.toolbar .group { height: 10px; background: #666; border-radius: 2px; justify-content: space-between; }
.toolbar button { padding: 0 3px; gap: 2px; flex: 1; }
.toolbar svg { width: 9px; height: 9px; }
.toolbar .arr { width: 5px; height: 5px; margin-left: 2px; }
.toolbar .arr.far { margin-left: 5px; }
.toolbar .group .on { background: #f6a63a; color: #43300f; }
.w-mode { width: 92px; }
.w-comp { width: 52px; }
.toolbar .w-comp button { padding: 0 1px; }
.w-sel { width: 163px; }
.toolbar .w-sel button { flex: 0 0 11px; padding: 0 1px; }
.toolbar .w-sel button.wide { flex: 1; }
.w-setup { width: 37px; }
.drop { padding: 0 1px; }
.w-drop { width: 42px; padding-left: 12px; height: 10px; font-weight: normal; }
.w-world { width: 77px; }
.toolbar .w-action button { flex: auto; }

/* Work area */
.work { flex: 1; min-height: 0; display: grid; grid-template-columns: 98px minmax(0, 1fr) 227px; background: #4a4a4a; }
.left { display: flex; flex-direction: column; background: #535353; border-right: 2px solid #434a4c; min-height: 0; }
.tools { display: grid; grid-template-columns: repeat(5, 1fr); gap: 1px; margin: 2px 2px 3px 4px; background: #4b4b4b; }
.tools button { height: 18px; background: #6a6a6a; border-radius: 2px; justify-content: center; }
.tools svg { width: 16px; height: 16px; }
.tabs { display: flex; align-items: flex-end; height: 10px; padding: 0 2px 0 10px; background: #2e2e2e; color: #a5a5a5; }
.tabs button { height: 9px; padding: 0 6px; border-radius: 3px 3px 0 0; background: #393939; margin-right: 1px; }
.side-tabs button { padding: 0 4px; }
.side-body { display: flex; flex: 1; min-height: 0; padding: 2px 0 0 4px; }
.side-main { flex: 1; min-width: 0; }
.side-main h2 { height: 11px; line-height: 10px; padding-left: 8px; font-weight: bold; background: #4b4b4b; color: #ddd; }
.stack { background: #696969; border-radius: 3px; overflow: hidden; }
.stack button { height: 11px; width: 100%; gap: 2px; padding-left: 1px; border-bottom: 1px solid #5d5d5d; font-weight: bold; }
.stack svg { width: 9px; height: 9px; }
.stack button:disabled { color: #8b8b8b; font-weight: normal; }
.stack .on { background: #f6a63a; color: #3c2a10; }
.stack.big button { height: 17px; gap: 0; padding-left: 0; }
.stack.big svg { width: 14px; height: 14px; }
.stack.lone { margin: 6px 0 1px; }
.set-parent { display: flex; align-items: center; gap: 3px; margin-top: 4px; padding-left: 4px; color: #a0a0a0; }
.set-parent select { flex: 1; }
.vtabs { width: 8px; margin: 0 1px 0 3px; display: flex; flex-direction: column; align-self: flex-start; background: #646464; border-radius: 3px; }
.vtabs button { writing-mode: vertical-rl; width: 8px; line-height: 8px; padding: 3px 0; color: #c4c4c4; }
.vtabs .on { background: #f6a63a; color: #3c2a10; }
.centre { display: grid; grid-template-rows: minmax(0, 437fr) minmax(0, 172fr); min-height: 0; }

/* 3D viewport */
.viewport { position: relative; background: #657172; overflow: hidden; }
.scene { position: absolute; inset: 0; width: 100%; height: 100%; }
.vp-top { position: relative; display: flex; height: 13px; align-items: center; padding: 0 8px 0 12px; gap: 10px; color: #d2d8d8; }
.vp-top button { width: 40px; height: 8px; padding-left: 4px; background: #5b6566; border-radius: 3px; }

/* Floating channel links window */
.links { position: absolute; left: 19px; top: 15px; width: 286px; height: 394px; display: flex; flex-direction: column; background: #555; box-shadow: 1px 1px 3px #333; }
.links-title { display: flex; align-items: center; gap: 3px; height: 8px; padding: 0 3px; background: #f6f6f6; color: #999; }
.links-title i { width: 6px; height: 6px; border: 1px solid #ccc; border-radius: 50%; }
.links-title span { flex: 1; text-align: center; padding-right: 26px; }
.links-load { display: grid; grid-template-columns: 129px 18px 1fr; gap: 2px; padding: 2px 2px 1px; }
.links-load button, .links-foot button { height: 9px; padding-left: 3px; background: #6a6a6a; border-radius: 2px; font-weight: bold; }
.links-load .swap { padding-left: 1px; }
.links-lists { flex: 1; min-height: 0; display: grid; grid-template-columns: 134px 5px 134px 7px; column-gap: 1px; padding: 0 2px; }
.list { background: #9ba5b1; color: #20262c; overflow: hidden; border-radius: 2px; min-width: 0; }
.bar { background: #6e6e6e; border-radius: 3px; }
.bar.short { margin-bottom: 18px; }
thead th { background: #687985; color: #a9b5be; }
.chan th:first-child { padding-left: 8px; }
.chan th:last-child, .chan td:last-child { width: 11px; text-align: center; border-left: 1px solid #8792a0; }
.chan td { border-bottom: 1px solid #97a1ad; line-height: 7px; }
.chan td:first-child { padding-left: 23px; position: relative; }
.chan tr:not(.root) td:first-child::before { content: "→"; position: absolute; left: 5px; color: #707b87; font-size: 5px; }
.chan .root td:first-child { padding-left: 2px; font-weight: bold; }
.chan .root .ic { margin: 0 2px 0 6px; width: 7px; height: 7px; }
.chan .root svg { width: 5px; height: 5px; vertical-align: top; }
.chan .add td:first-child { padding-left: 18px; color: #808b97; }
.chan .sel td, .chan .sel td:last-child { background: #404b57; color: #d9a152; border-bottom-color: #404b57; }
.chan .hot td { background: #ec6757; border-bottom-color: #ec6757; color: #45110d; }
.o { display: inline-block; width: 5px; height: 5px; border: 1px solid #3c444c; border-radius: 50%; vertical-align: top; margin-top: 1px; }
.o.blue { border-color: #25258b; background: #5b62b5; }
.o.pale { background: #e0e0e0; }
.x, .y, .z, .dot { position: absolute; left: 18px; top: 2px; width: 4px; height: 4px; border-radius: 50%; border: 1px solid #b04050; }
.y { border-color: #398078; }
.z { border-color: #4450a0; }
.dot { border: 0; width: 3px; height: 3px; background: #dfe8ee; }
.links-foot { display: grid; grid-template-columns: repeat(4, 1fr); padding: 2px 2px 3px; }
.links-foot .on { background: #f6a63a; color: #3c2a10; }
.links-foot button:disabled { color: #999; }

/* In-view controller */
.hud { position: absolute; left: 409px; top: 324px; width: 124px; height: 92px; padding: 10px 4px 0 3px; border-radius: 5px; background: linear-gradient(rgba(72, 82, 83, .65) 10px, rgba(60, 70, 71, .6) 10px); color: #a9b0b0; display: flex; flex-direction: column; }
.hud-name { padding-left: 31px; height: 11px; }
.hud-name.low { padding-top: 2px; }
.hud-row { display: flex; }
.hud-row > span { width: 22px; }
.hud-box { flex: 1; display: flex; flex-wrap: wrap; justify-content: space-between; padding: 0 6px 0 1px; border: 1px solid #5c6464; border-radius: 3px; background: rgba(32, 34, 33, .85); color: #e2e2e2; height: 10px; }
.hud-box.tall { height: 17px; }
.hud-box b { font-weight: normal; }
.hud-box input { appearance: none; width: 100%; height: 4px; border-bottom: 1px solid #555858; background: repeating-linear-gradient(90deg, #5c5f5f 0 1px, transparent 1px 12px); }
.hud-box input::-webkit-slider-thumb { appearance: none; width: 3px; height: 3px; background: #bbb; }
.hud-keys { display: flex; align-items: center; gap: 5px; padding: 4px 0 4px 35px; }
.hud-keys button { width: 10px; height: 10px; border: 1px solid #7d8585; border-radius: 50%; background: #222a2b; justify-content: center; }
.hud-keys svg { width: 6px; height: 6px; }
.hud-keys .white { border-color: #d5d5d5; }
.hud-keys span { padding-left: 3px; }
.graph { width: 36px; height: 11px; margin: 0 0 4px 52px; padding-left: 3px; gap: 4px; border-radius: 4px; background: #40494d; color: #c4caca; }
.graph svg { width: 9px; height: 9px; }
.cursor { position: absolute; left: 427px; top: 365px; width: 6px; height: 10px; }
.vp-info { position: absolute; right: 9px; bottom: 1px; display: flex; flex-direction: column; align-items: flex-end; color: #d0d6d4; }
.vp-info b { color: #dfc45a; }

/* Node schematic */
.nodes { position: relative; background: #6c7b88; border-top: 1px solid #8a98a0; overflow: hidden; }
.node-bar { display: flex; align-items: center; height: 15px; padding: 0 10px 0 3px; gap: 3px; color: #dfe3e6; }
.node-bar .group, .add-sel { background: #4c5965; border-radius: 2px; height: 9px; justify-content: space-around; }
.node-bar select { background-color: #4c5965; }
.node-bar svg { width: 7px; height: 7px; }
.node-bar .fold { width: 4px; height: 4px; color: #46535f; margin-right: 3px; }
.three { width: 31px; }
.ws { width: 150px; padding-left: 2px; }
.two { width: 18px; }
.node-bar .wide-ic { width: 16px; }
.four { width: 42px; }
.add-sel { padding: 0 3px; width: 46px; }
.add-more { width: 50px; }
.node-bar .orange { width: 20px; background: #eda53f; }
.canvas { position: absolute; inset: 0; }
.wires { position: absolute; left: 0; top: 0; width: 943px; height: 172px; }
.wires text { font-size: 5px; fill: #93a0ab; }
.node { position: absolute; width: 84px; padding: 1px; background: #424d59; border: 2px solid; border-radius: 4px; color: #bcc5ce; }
.node div { height: 8px; display: flex; align-items: center; gap: 3px; padding-left: 9px; }
.node div:first-child { border-bottom: 1px solid #8995a0; padding-left: 4px; gap: 5px; }
.node svg { width: 5px; height: 5px; }
.node .out { padding-left: 28px; }
.node .gold { color: #d0a052; }
.pink { border-color: #c97c80; }
.lime { border-color: #78b08d; }
.n1 { left: 217px; top: 53px; }
.n2 { left: 338px; top: 55px; }
.n3 { left: 470px; top: 61px; }
.n4 { left: 587px; top: 63px; }

/* Right column */
.right { display: flex; flex-direction: column; background: #4d4d4d; border-left: 2px solid #3f4446; min-height: 0; }
.filter { display: grid; grid-template-columns: 108px 108px 1fr; gap: 1px; height: 9px; font-weight: bold; }
.filter select { padding-left: 2px; }
.filter button { background: #666; padding-left: 1px; }
.pane { flex: 1; min-height: 0; display: grid; grid-template-columns: minmax(0, 1fr) 6px; gap: 1px; padding-left: 1px; }
.items-pane { flex: 0 0 231px; }
.items { height: 86px; }
.items th:nth-child(-n+3) { width: 12px; text-align: center; color: #d8e0e6; }
.items td:nth-child(-n+3), .items th:nth-child(-n+3) { border-right: 1px solid #8591a0; text-align: center; }
.items svg { width: 5px; height: 5px; vertical-align: middle; }
.items td:first-child svg, .items th svg { width: 7px; height: 7px; }
.items td .ic, .props .ic { width: 7px; height: 7px; margin: 0 1px 0 3px; }
.items .nm { padding-left: 7px; }
.items tbody tr:nth-child(odd) { background: #98a2ae; }
.items td:last-child { padding-left: 2px; }
.scene-row td:last-child { font-weight: bold; }
.items td.kid { padding-left: 8px; }
.items tbody .dim { background: #838b96; }
.items .go td.kid { background: #72c274; }
.flag { background: #e05b50; }
.hbar { height: 6px; width: 96px; margin: 1px 0 2px 1px; background: #707070; border-radius: 3px; }
.props th { height: 9px; }
.props th:nth-child(2) { width: 34px; }
.props th:nth-child(3) { width: 9px; }
.props th:nth-child(4) { width: 31px; }
.props th, .props td { border-right: 1px solid #8591a0; }
.props th:first-child { padding-left: 3px; }
.props svg { width: 5px; height: 5px; vertical-align: middle; }
.props .l1 { padding-left: 7px; }
.props .l2 { padding-left: 28px; }
.props .l3 { padding-left: 24px; }
.props .plusrow { position: relative; }
.props .plusrow::before { content: "+"; position: absolute; left: 19px; }
.props .num { color: #4550a4; }
.ghost { color: #7b8793; }
.props .sd { margin-left: 2px; }
.command { display: flex; align-items: center; gap: 2px; height: 14px; padding: 4px 1px 2px 1px; }
.command svg { width: 5px; height: 5px; }
.command input { flex: 1; height: 8px; padding-left: 4px; background: #9ba5b1; border-radius: 2px; }
.command input::placeholder { color: #66707a; }

/* Timeline */
.timeline { padding: 3px 0 0 4px; background: #4c4c4c; border-top: 1px solid #3b3b3b; }
.ruler { height: 12px; background: linear-gradient(#a3acb7, #8791a0); padding: 0 14px 0 10px; color: #2d343c; }
.ticks { position: relative; height: 12px; display: flex; justify-content: space-between; align-items: flex-end;
  background: linear-gradient(90deg, #4e5863 1px, transparent 1px) 0 0 / calc(100% / 20) 6px repeat-x, linear-gradient(90deg, #707b87 1px, transparent 1px) 0 0 / calc(100% / 240) 4px repeat-x; }
.ticks span { width: 0; display: flex; justify-content: center; line-height: 7px; }
.head { position: absolute; left: 0; top: 1px; width: 1px; height: 10px; background: #fff; }
.range { display: flex; justify-content: space-between; height: 8px; line-height: 7px; padding: 0 11px; background: #626262; color: #222; }

/* Transport */
.transport { display: flex; justify-content: center; align-items: center; gap: 2px; height: 17px; padding-bottom: 1px; background: #535353; border-top: 2px solid #414141; color: #e2e2e2; }
.transport > *, .transport select { height: 11px; background-color: #696969; border-radius: 2px; }
.transport > button { padding: 0 2px; gap: 3px; }
.transport > .b48 { gap: 1px; padding-left: 1px; }
.transport svg { width: 8px; height: 8px; }
.transport .group { justify-content: space-around; }
.transport select.b48 { padding-left: 10px; }
.b24 { width: 22px; }
.b34 { width: 35px; }
.b38 { width: 37px; }
.b48 { width: 47px; }
.transport .frame { width: 37px; padding-left: 5px; background: linear-gradient(90deg, #8792a0, #bcc5d2, #8792a0); color: #222; }
.r { color: #d87468; }
.fade { color: #aaa; }
.g { color: #7fd69c; }
.statusbar { display: flex; height: 14px; padding: 2px 6px; background: #535353; border-bottom: 2px solid #5e5e5e; color: #c2c2c2; }
.pos { width: 377px; }
.hints i { display: inline-block; width: 4px; height: 4px; border-radius: 50%; background: #eee; margin: 0 1px; }
```
